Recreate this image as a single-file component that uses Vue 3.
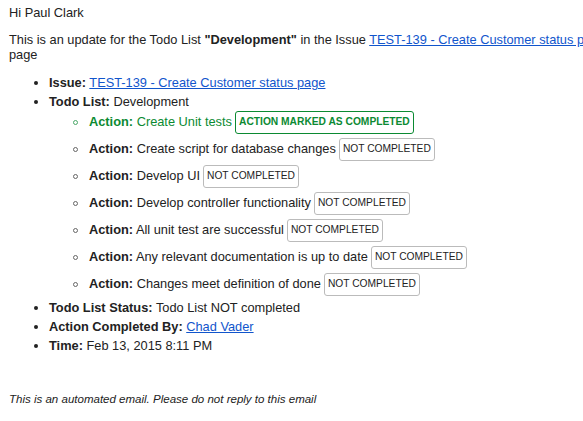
<script setup>
const actions = [
  { name: 'Create Unit tests', done: true },
  { name: 'Create script for database changes', done: false },
  { name: 'Develop UI', done: false },
  { name: 'Develop controller functionality', done: false },
  { name: 'All unit test are successful', done: false },
  { name: 'Any relevant documentation is up to date', done: false },
  { name: 'Changes meet definition of done', done: false },
];
</script>

<template>
  <div class="page">
    <div class="mail">
      <p class="greeting">Hi Paul Clark</p>
      <p class="intro">
        This is an update for the Todo List <b>"Development"</b> in the Issue
        <a href="#">TEST-139 - Create Customer status page</a> page
      </p>
      <ul class="details">
        <li>
          <b>Issue:</b> <a href="#">TEST-139 - Create Customer status page</a>
        </li>
        <li>
          <b>Todo List:</b> Development
          <ul class="actions">
            <li v-for="action in actions" :key="action.name" :class="{ done: action.done }">
              <b>Action:</b> {{ action.name }}
              <span class="tag">{{ action.done ? 'ACTION MARKED AS COMPLETED' : 'NOT COMPLETED' }}</span>
            </li>
          </ul>
        </li>
        <li><b>Todo List Status:</b> Todo List NOT completed</li>
        <li><b>Action Completed By:</b> <a href="#">Chad Vader</a></li>
        <li><b>Time:</b> Feb 13, 2015 8:11 PM</li>
      </ul>
      <p class="footer">This is an automated email. Please do not reply to this email</p>
    </div>
  </div>
</template>

<style scoped>
.page {
  width: 583px;
  height: 421px;
  overflow: hidden;
  background: #fff;
}
.mail {
  width: 612px;
  padding: 5px 0 0 9px;
  font-family: "Liberation Sans", Arial, sans-serif;
  font-size: 12.8px;
  line-height: 15px;
  color: #222;
}
p {
  margin: 0;
}
a {
  color: #1155cc;
}
.intro {
  margin-top: 12px;
}
.details {
  margin: 13px 0 0;
  padding-left: 40px;
  list-style: none;
}
.details > li {
  position: relative;
  margin-bottom: 4px;
}
/* hand-drawn bullets, the native ones sit too far right and too big */
.details > li::before {
  content: "";
  position: absolute;
  left: -15px;
  top: 6px;
  width: 4px;
  height: 4px;
  border-radius: 50%;
  background: #222;
}
.actions {
  margin: 2px 0 0;
  padding-left: 40px;
  list-style: none;
}
.actions li {
  position: relative;
  height: 23px;
  margin-bottom: 4px;
  line-height: 21px;
}
.actions li::before {
  content: "";
  position: absolute;
  left: -16px;
  top: 9px;
  box-sizing: border-box;
  width: 5px;
  height: 5px;
  border: 1px solid #666;
  border-radius: 50%;
}
.actions li.done {
  color: #0b8a32;
}
.actions li.done::before {
  border-color: #4aa868;
}
.tag {
  display: inline-block;
  margin-left: -0.5px;
  padding: 0 3px 1px;
  border: 1px solid #bbb;
  border-radius: 3px;
  font-size: 10.24px;
  line-height: 20px;
  vertical-align: top;
}
.done .tag {
  border-color: #0b8a32;
  font-weight: bold;
}
.footer {
  margin-top: 39px;
  font-size: 11.52px;
  font-style: italic;
}
</style>
